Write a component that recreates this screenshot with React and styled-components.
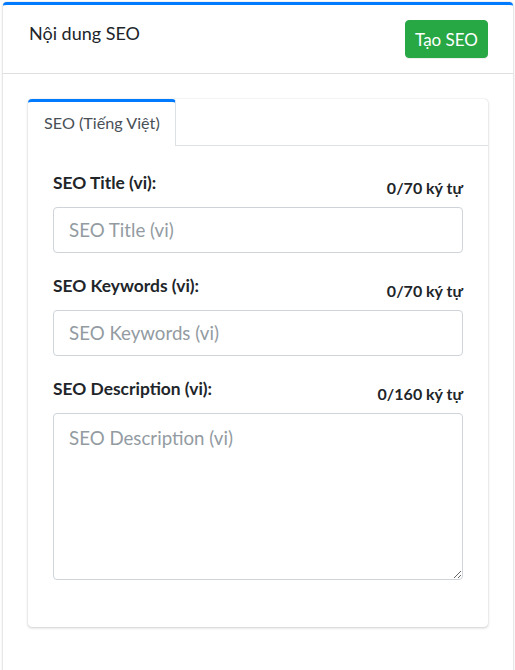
import React from "react";
import styled, { createGlobalStyle } from "styled-components";

const Global = createGlobalStyle`
  html, body { margin: 0; padding: 0; background: #fff; overflow: hidden; }
  body { font-family: "Lato", "Noto Sans", sans-serif; color: #212529; }
  * { box-sizing: border-box; }
`;

const Page = styled.div`
  padding: 2px 2px 0 3px;
`;

const Card = styled.section`
  background: #fff;
  border-top: 3px solid #007bff;
  border-radius: 4px;
  box-shadow: 0 0 1px rgba(0, 0, 0, 0.25), 0 1px 3px rgba(0, 0, 0, 0.2);
  min-height: 720px;
`;

const CardHeader = styled.header`
  display: flex;
  align-items: flex-start;
  justify-content: space-between;
  padding: 15px 25px 15px 26px;
  border-bottom: 1px solid rgba(0, 0, 0, 0.125);
`;

const CardTitle = styled.h3`
  margin: 0;
  font-size: 18px;
  font-weight: 400;
  line-height: 26px;
  color: #212529;
`;

const Button = styled.button`
  height: 38px;
  width: 83px;
  padding: 0;
  border: 1px solid #28a745;
  border-radius: 4px;
  background: #28a745;
  color: #fff;
  font-family: inherit;
  font-size: 17px;
  box-shadow: 0 1px 1px rgba(0, 0, 0, 0.075);
`;

const CardBody = styled.div`
  padding: 25px;
`;

const TabCard = styled.div`
  background: #fff;
  border-radius: 4px;
  box-shadow: 0 0 1px rgba(0, 0, 0, 0.2), 0 1px 3px rgba(0, 0, 0, 0.18);
`;

const TabBar = styled.div`
  display: flex;
  border-bottom: 1px solid #dee2e6;
  height: 47px;
`;

const Tab = styled.div`
  width: 148px;
  margin-bottom: -1px;
  border-top: 3px solid #007bff;
  border-right: 1px solid #dee2e6;
  border-radius: 4px 4px 0 0;
  background: #fff;
  color: #495057;
  font-size: 16.2px;
  line-height: 20px;
  padding: 11px 0 0 16px;
`;

const TabPane = styled.div`
  padding: 26px 25px 25px;
`;

const Group = styled.div`
  margin-bottom: 22px;
`;

const LabelRow = styled.div`
  display: flex;
  justify-content: space-between;
  align-items: flex-start;
  height: 35px;
`;

const Label = styled.label`
  font-weight: 700;
  font-size: 17.4px;
  line-height: 22px;
`;

const Counter = styled.small`
  font-weight: 700;
  font-size: 16px;
  line-height: 24px;
  margin-top: 4px;
`;

const fieldCss = `
  display: block;
  width: 100%;
  border: 1px solid #ced4da;
  border-radius: 4px;
  font-family: "Lato", "Noto Sans", sans-serif;
  font-size: 18.7px;
  color: #495057;
  background: #fff;
  outline: none;
  &::placeholder { color: #939ba2; opacity: 1; }
`;

const Input = styled.input`
  ${fieldCss}
  height: 46px;
  padding: 0 15px;
`;

const TextArea = styled.textarea`
  ${fieldCss}
  height: 167px;
  padding: 10px 15px;
  resize: vertical;
  line-height: 1.5;
`;

const fields = [
  { label: "SEO Title (vi):", ph: "SEO Title (vi)", max: 70 },
  { label: "SEO Keywords (vi):", ph: "SEO Keywords (vi)", max: 70 },
  { label: "SEO Description (vi):", ph: "SEO Description (vi)", max: 160, area: true },
];

export default function App() {
  return (
    <Page>
      <Global />
      <Card>
        <CardHeader>
          <CardTitle>Nội dung SEO</CardTitle>
          <Button type="button">Tạo SEO</Button>
        </CardHeader>
        <CardBody>
          <TabCard>
            <TabBar>
              <Tab>SEO (Tiếng Việt)</Tab>
            </TabBar>
            <TabPane>
              {fields.map((f) => (
                <Group key={f.label}>
                  <LabelRow>
                    <Label>{f.label}</Label>
                    <Counter>0/{f.max} ký tự</Counter>
                  </LabelRow>
                  {f.area ? <TextArea placeholder={f.ph} /> : <Input placeholder={f.ph} />}
                </Group>
              ))}
            </TabPane>
          </TabCard>
        </CardBody>
      </Card>
    </Page>
  );
}
